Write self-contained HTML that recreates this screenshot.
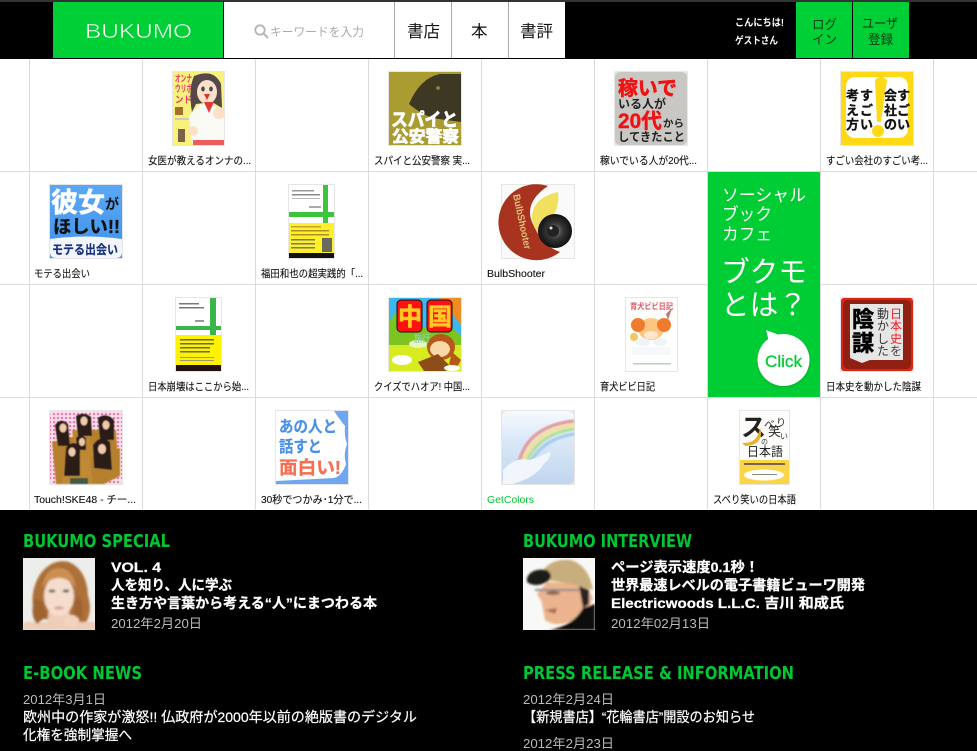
<!DOCTYPE html>
<html lang="ja"><head><meta charset="utf-8"><title>BUKUMO</title>
<style>
html,body{margin:0;padding:0;background:#fff;width:977px;height:751px;overflow:hidden}
svg{display:block}
text{font-family:"Liberation Sans","Noto Sans CJK JP",sans-serif}
.cap{font-size:10.5px;fill:#111;stroke:#111;stroke-width:.12}
.h{font-size:18px;font-weight:bold;fill:#00c832;font-family:"DejaVu Sans","Liberation Sans",sans-serif}
.b{font-size:14px;font-weight:bold;fill:#fff;stroke:#fff;stroke-width:.25}
.d{font-size:13px;fill:#bbb}
.n{font-size:14px;fill:#fff;stroke:#fff;stroke-width:.2}
.nav{font-size:16.5px;fill:#111}
.g{font-size:13px;fill:#0b3a16}
.s{font-size:17px;fill:#fff}
.big{font-size:29px;fill:#fff}
</style></head><body>
<svg width="977" height="751" viewBox="0 0 977 751" xmlns="http://www.w3.org/2000/svg">
<defs>
<filter id="bl"><feGaussianBlur stdDeviation="1"/></filter>
<filter id="bl3"><feGaussianBlur stdDeviation=".6"/></filter>
<filter id="sh" x="-20%" y="-20%" width="140%" height="140%"><feDropShadow dx="0" dy="1" stdDeviation="1" flood-color="#063" flood-opacity=".35"/></filter>
<linearGradient id="rb" x1="0" y1="0" x2="0" y2="1"><stop offset="0" stop-color="#f6faff"/><stop offset=".4" stop-color="#dbe8f7"/><stop offset="1" stop-color="#c0d6ef"/></linearGradient>
<linearGradient id="blu" x1="0" y1="0" x2="0" y2="1"><stop offset="0" stop-color="#5aa8f5"/><stop offset="1" stop-color="#3f90ea"/></linearGradient>
<radialGradient id="lens"><stop offset="0" stop-color="#8a8a8a"/><stop offset=".5" stop-color="#333"/><stop offset="1" stop-color="#111"/></radialGradient>
<pattern id="dots" width="4" height="4" patternUnits="userSpaceOnUse"><rect width="4" height="4" fill="#fbe3ee"/><circle cx="2" cy="2" r="1.300" fill="#ee7db4"/></pattern>
</defs>
<rect width="977" height="751" fill="#fff"/>
<!-- grid -->
<g fill="#dcdcdc">
<rect x="29" y="58" width="1" height="452"/><rect x="142" y="58" width="1" height="452"/><rect x="255" y="58" width="1" height="452"/><rect x="368" y="58" width="1" height="452"/><rect x="481" y="58" width="1" height="452"/><rect x="594" y="58" width="1" height="452"/><rect x="707" y="58" width="1" height="452"/><rect x="820" y="58" width="1" height="452"/><rect x="933" y="58" width="1" height="452"/>
<rect x="0" y="171" width="977" height="1"/><rect x="0" y="284" width="977" height="1"/><rect x="0" y="397" width="977" height="1"/>
</g>
<!-- header -->
<rect width="977" height="59" fill="#000"/><rect width="977" height="2" fill="#333"/>
<rect x="53" y="2" width="170" height="56" fill="#00cf35"/>
<text x="85" y="38" font-size="20" fill="#fff" stroke="#00cf35" stroke-width=".5" textLength="107" lengthAdjust="spacingAndGlyphs">BUKUMO</text>
<rect x="224" y="2" width="170" height="56" fill="#fff"/>
<circle cx="260" cy="30" r="4.700" fill="none" stroke="#b5b5b5" stroke-width="1.800"/><path d="M263.500 33.500L268 38" stroke="#b5b5b5" stroke-width="2"/>
<text x="270" y="36" font-size="12" fill="#aaa" textLength="94" lengthAdjust="spacingAndGlyphs">キーワードを入力</text>
<rect x="395" y="2" width="170" height="56" fill="#fff"/><rect x="394" y="2" width="1" height="56" fill="#aaa"/><rect x="451" y="2" width="1" height="56" fill="#aaa"/><rect x="508" y="2" width="1" height="56" fill="#aaa"/>
<text class="nav" x="407" y="37" textLength="33" lengthAdjust="spacingAndGlyphs">書店</text><text class="nav" x="471" y="37">本</text><text class="nav" x="520" y="37" textLength="33" lengthAdjust="spacingAndGlyphs">書評</text>
<text x="735" y="26" font-size="10" font-weight="bold" fill="#fff" textLength="49" lengthAdjust="spacingAndGlyphs">こんにちは!</text>
<text x="735" y="44" font-size="10" font-weight="bold" fill="#fff" textLength="43" lengthAdjust="spacingAndGlyphs">ゲストさん</text>
<rect x="796" y="2" width="56" height="56" fill="#00cf35"/><rect x="853" y="2" width="56" height="56" fill="#00cf35"/>
<text class="g" x="812" y="29" textLength="25" lengthAdjust="spacingAndGlyphs">ログ</text><text class="g" x="812" y="44" textLength="25" lengthAdjust="spacingAndGlyphs">イン</text>
<text class="g" x="862" y="28" textLength="36" lengthAdjust="spacingAndGlyphs">ユーザ</text><text class="g" x="868" y="44" textLength="25" lengthAdjust="spacingAndGlyphs">登録</text>
<!-- green panel -->
<rect x="708" y="172" width="112" height="225" fill="#00cc33"/>
<text class="s" x="722" y="201" textLength="84" lengthAdjust="spacingAndGlyphs">ソーシャル</text><text class="s" x="722" y="220" textLength="50" lengthAdjust="spacingAndGlyphs">ブック</text><text class="s" x="722" y="240" textLength="50" lengthAdjust="spacingAndGlyphs">カフェ</text>
<text class="big" x="721" y="282" textLength="86" lengthAdjust="spacingAndGlyphs">ブクモ</text><text class="big" x="721" y="315" textLength="86" lengthAdjust="spacingAndGlyphs">とは？</text>
<g filter="url(#sh)"><path d="M766 330L782 336L770 346Z" fill="#fff"/><circle cx="783.500" cy="360" r="26" fill="#fff"/></g>
<text x="765" y="367" font-size="17" fill="#00cc33" stroke="#00cc33" stroke-width=".3" textLength="37" lengthAdjust="spacingAndGlyphs">Click</text>
<!-- covers row 1 -->
<g>
<rect x="172" y="71" width="53" height="75" fill="#e6e6e6"/><rect x="173" y="72" width="51" height="73" fill="#f7f27c"/>
<g font-size="9.500" font-weight="bold" fill="#e6386c"><text x="175" y="82" textLength="17" lengthAdjust="spacingAndGlyphs">オンナ</text><text x="175" y="92" textLength="17" lengthAdjust="spacingAndGlyphs">ウリボ</text><text x="175" y="103" textLength="17" lengthAdjust="spacingAndGlyphs">ンド</text></g>
<path d="M194 76Q214 68 221 84L222 108L212 102L196 104L192 112Q188 90 194 76Z" fill="#55474a"/>
<ellipse cx="207" cy="92" rx="10" ry="12" fill="#fde0c8"/><ellipse cx="203" cy="89" rx="1.800" ry="2.500" fill="#445"/><ellipse cx="211" cy="89" rx="1.800" ry="2.500" fill="#445"/><path d="M204 94L210 94L207 100Z" fill="#d33"/>
<path d="M189 116L200 104L215 106L224 118L224 143L192 143Z" fill="#fafaf5"/><path d="M204 102L214 102L209 113Z" fill="#e23a3a"/><path d="M193 140L224 140L224 145L193 145Z" fill="#ef5a5a"/><ellipse cx="219" cy="113" rx="6" ry="6" fill="#fde0c8"/><ellipse cx="193" cy="131" rx="5" ry="5" fill="#fde0c8"/>
<rect x="175" y="107" width="8" height="8" fill="#a5702f"/><rect x="178" y="129" width="7" height="13" fill="#7c624a"/><rect x="175" y="118" width="14" height="2" fill="#ccb"/>
</g>
<g>
<rect x="388" y="71" width="74" height="75" fill="#e6e6e6"/><rect x="389" y="72" width="72" height="73" fill="#aa9c30"/>
<path d="M409 104Q420 78 440 74L461 74L461 122L432 118Q418 112 409 104Z" fill="#3d3823"/><circle cx="438" cy="88" r="2" fill="#887a30"/>
<text x="391" y="126" font-size="18" font-weight="bold" fill="#fff" stroke="#fff" stroke-width=".8" textLength="67" lengthAdjust="spacingAndGlyphs">スパイと</text>
<text x="392" y="142" font-size="16" font-weight="bold" fill="#fff" stroke="#fff" stroke-width=".8" textLength="67" lengthAdjust="spacingAndGlyphs">公安警察</text>
</g>
<g>
<rect x="614" y="71" width="74" height="75" rx="2" fill="#e6e6e6"/><rect x="615" y="72" width="72" height="73" rx="5" fill="#c9c7c4"/>
<text x="618" y="95" font-size="20" font-weight="bold" fill="#f21111" stroke="#f21111" stroke-width=".5" textLength="59" lengthAdjust="spacingAndGlyphs">稼いで</text>
<text x="618" y="108" font-size="12" font-weight="bold" fill="#222" textLength="48" lengthAdjust="spacingAndGlyphs">いる人が</text>
<text x="618" y="128" font-size="21" font-weight="bold" fill="#f21111" stroke="#f21111" stroke-width=".4" textLength="44" lengthAdjust="spacingAndGlyphs">20代</text><text x="663" y="127" font-size="10" font-weight="bold" fill="#222" textLength="21" lengthAdjust="spacingAndGlyphs">から</text>
<text x="618" y="141" font-size="12" font-weight="bold" fill="#222" textLength="67" lengthAdjust="spacingAndGlyphs">してきたこと</text>
</g>
<g>
<rect x="840" y="71" width="74" height="75" fill="#e6e6e6"/><rect x="841" y="72" width="72" height="73" fill="#ffd816"/><rect x="846" y="77" width="62" height="61" rx="9" fill="#fff"/>
<path d="M875 80Q881 74 887 80L881 122L877 122Z" fill="#ffd816"/><circle cx="878" cy="131" r="6" fill="#ffd816"/>
<g font-size="13" font-weight="bold" fill="#111" stroke="#111" stroke-width=".3"><text x="897" y="100">す</text><text x="897" y="115">ご</text><text x="897" y="129">い</text><text x="884" y="100">会</text><text x="884" y="115">社</text><text x="884" y="129">の</text><text x="860" y="100">す</text><text x="860" y="115">ご</text><text x="860" y="129">い</text><text x="846" y="100">考</text><text x="846" y="115">え</text><text x="846" y="129">方</text></g>
</g>
<!-- row 2 -->
<g>
<rect x="49" y="184" width="74" height="75" fill="#e6e6e6"/><rect x="50" y="185" width="72" height="73" fill="url(#blu)"/>
<text x="51" y="212" font-size="27" font-weight="bold" fill="#fff" stroke="#fff" stroke-width=".6" textLength="54" lengthAdjust="spacingAndGlyphs">彼女</text><text x="105" y="209" font-size="14" font-weight="bold" fill="#111">が</text>
<text x="53" y="233" font-size="18" font-weight="bold" fill="#111" stroke="#111" stroke-width=".3" textLength="67" lengthAdjust="spacingAndGlyphs">ほしい!!</text>
<path d="M50 239Q86 234 122 239L122 252Q122 258 116 258L56 258Q50 258 50 252Z" fill="#f2f5fb"/>
<text x="52" y="254" font-size="12.500" font-weight="bold" fill="#17337e" stroke="#17337e" stroke-width=".2" textLength="66" lengthAdjust="spacingAndGlyphs">モテる出会い</text>
</g>
<g>
<rect x="288" y="184" width="47" height="75" fill="#e6e6e6"/><rect x="289" y="185" width="45" height="73" fill="#fff"/>
<rect x="323" y="185" width="5" height="38" fill="#3cc53a"/><rect x="289" y="212" width="45" height="5" fill="#3cc53a"/><rect x="289" y="223" width="45" height="30" fill="#fff02a"/><rect x="289" y="253" width="45" height="5" fill="#111"/>
<rect x="292" y="190" width="22" height="1.500" fill="#999"/><rect x="292" y="194" width="28" height="1.500" fill="#888"/><rect x="292" y="198" width="28" height="1" fill="#bbb"/><rect x="309" y="206" width="12" height="2" fill="#aaa"/>
<rect x="291" y="226" width="30" height="1.500" fill="#c9a030"/><rect x="291" y="230" width="38" height="1.500" fill="#b09020"/><rect x="291" y="234" width="38" height="1.500" fill="#b09020"/><rect x="291" y="239" width="24" height="1.500" fill="#776"/><rect x="291" y="243" width="24" height="1.500" fill="#776"/><rect x="291" y="247" width="24" height="1.500" fill="#776"/><rect x="322" y="238" width="10" height="14" fill="#6a6a5a"/>
</g>
<g>
<rect x="501" y="184" width="74" height="75" fill="#e6e6e6"/><rect x="502" y="185" width="72" height="73" fill="#fafafa"/>
<path d="M548 186A38 38 0 1 0 560 252Q542 246 532 222Q524 202 548 186Z" fill="#a8341f"/>
<path d="M558 192Q532 198 532 218Q534 232 544 238L552 218Q560 206 558 192Z" fill="#f1df5e"/>
<text x="513" y="195" font-size="10" font-weight="bold" fill="#e0c078" transform="rotate(78 513 195)" textLength="56" lengthAdjust="spacingAndGlyphs">BulbShooter</text>
<circle cx="555" cy="231" r="17" fill="url(#lens)"/><circle cx="553" cy="231" r="6" fill="#222"/><circle cx="551" cy="228" r="1.500" fill="#ddd"/>
</g>
<!-- row 3 -->
<g>
<rect x="175" y="297" width="47" height="75" fill="#e6e6e6"/><rect x="176" y="298" width="45" height="73" fill="#fff"/>
<rect x="210" y="298" width="6" height="37" fill="#3bb54a"/><rect x="176" y="326" width="45" height="4" fill="#3bb54a"/><rect x="176" y="335" width="45" height="30" fill="#fff200"/><rect x="176" y="365" width="45" height="6" fill="#211"/>
<rect x="179" y="303" width="20" height="1.500" fill="#777"/><rect x="179" y="307" width="25" height="1.500" fill="#777"/><rect x="195" y="320" width="9" height="2" fill="#999"/>
<rect x="180" y="339" width="34" height="1.500" fill="#665"/><rect x="180" y="343" width="34" height="1.500" fill="#665"/><rect x="180" y="347" width="30" height="1.500" fill="#665"/><rect x="180" y="351" width="30" height="1.500" fill="#665"/><rect x="180" y="357" width="34" height="1" fill="#997"/><rect x="180" y="360" width="34" height="1" fill="#997"/>
</g>
<g>
<rect x="388" y="297" width="74" height="75" fill="#e6e6e6"/><rect x="389" y="298" width="72" height="73" fill="#3db7ee"/><path d="M440 298L461 298L461 325Z" fill="#f08a22"/>
<path d="M389 322L396 312L405 330L416 330L428 326L445 322L461 336L461 371L389 371Z" fill="#7cc420"/><path d="M389 345L461 345L461 371L389 371Z" fill="#d6ec20"/>
<rect x="397" y="300" width="25" height="32" rx="4" fill="#f11" stroke="#111"/><rect x="427" y="300" width="25" height="32" rx="4" fill="#f11" stroke="#111"/>
<text x="398" y="325" font-size="24" font-weight="bold" fill="#fc2" stroke="#fc2" stroke-width=".6">中</text><text x="428" y="325" font-size="24" font-weight="bold" fill="#fc2" stroke="#fc2" stroke-width=".6">国</text>
<ellipse cx="441" cy="347" rx="14" ry="13" fill="#b5581a"/><ellipse cx="440" cy="349" rx="10" ry="8" fill="#fbd9a6"/><path d="M418 362L438 354L450 366L446 371L424 371Z" fill="#8c4d18"/><path d="M452 352L461 360L456 369L449 364Z" fill="#b5581a"/>
<ellipse cx="402" cy="360" rx="10" ry="5" fill="#fff"/><ellipse cx="418" cy="344" rx="9" ry="4" fill="#e8f5c0"/><ellipse cx="452" cy="368" rx="8" ry="3" fill="#fff"/><text x="414" y="342" font-size="10" font-weight="bold" fill="#8ed0a0" textLength="16" lengthAdjust="spacingAndGlyphs">旅行</text>
</g>
<g>
<rect x="625" y="297" width="53" height="75" fill="#e6e6e6"/><rect x="626" y="298" width="51" height="73" fill="#fefefc"/>
<text x="630" y="309" font-size="8" font-weight="bold" fill="#d9566a" textLength="43" lengthAdjust="spacingAndGlyphs">育犬ビビ日記</text>
<ellipse cx="651" cy="329" rx="13" ry="11" fill="#fbc680"/><ellipse cx="638" cy="325" rx="7" ry="7" fill="#ef7c2e"/><ellipse cx="664" cy="325" rx="7" ry="7" fill="#ef7c2e"/><ellipse cx="651" cy="335" rx="7" ry="4" fill="#ffe8cf"/><path d="M666 314L672 308L668 320Z" fill="#b77"/><circle cx="634" cy="337" r="4" fill="#eec860"/>
<ellipse cx="643" cy="342" rx="7" ry="4" fill="#eef3f8"/><ellipse cx="660" cy="342" rx="7" ry="4" fill="#eef3f8"/><rect x="632" y="347" width="38" height="8" fill="#f4f8fb"/><rect x="633" y="363" width="38" height="1.500" fill="#bcc"/>
</g>
<g>
<rect x="840" y="297" width="74" height="75" fill="#e6e6e6"/><rect x="841" y="298" width="72" height="73" rx="3" fill="#d92612"/><rect x="843" y="300" width="68" height="69" rx="5" fill="#541c10" opacity=".55"/>
<path d="M850 304L903 304L903 360L870 360L862 363L850 358Z" fill="#e6e6e6"/>
<text x="852" y="327" font-size="22" font-weight="bold" fill="#000" stroke="#000" stroke-width=".6">陰</text><text x="852" y="351" font-size="22" font-weight="bold" fill="#000" stroke="#000" stroke-width=".6">謀</text>
<g font-size="12"><text x="877" y="318" fill="#333">動</text><text x="877" y="330" fill="#333">か</text><text x="877" y="343" fill="#333">し</text><text x="877" y="355" fill="#333">た</text><text x="890" y="318" fill="#e22">日</text><text x="890" y="330" fill="#e22">本</text><text x="890" y="343" fill="#e22">史</text><text x="890" y="355" fill="#444">を</text></g>
</g>
<!-- row 4 -->
<g>
<rect x="49" y="410" width="74" height="75" fill="#e6e6e6"/><rect x="50" y="411" width="72" height="73" rx="6" fill="url(#dots)"/>
<g filter="url(#bl3)">
<path d="M52 442L76 436L80 484L56 484Z" fill="#b6812f"/><path d="M72 430L96 430L100 462L76 462Z" fill="#bd8632"/><path d="M88 430L116 430L118 462L96 462Z" fill="#b6812f"/><path d="M64 462L90 458L96 484L62 484Z" fill="#c08a34"/><path d="M90 456L120 448L120 476L104 484L92 484Z" fill="#b6812f"/>
<path d="M55 425Q61 417 68 424L70 446L58 446Z" fill="#2b1b12"/><path d="M76 416Q84 411 91 417L92 436L78 436Z" fill="#2b1b12"/><path d="M98 418Q106 412 114 420L114 440L100 440Z" fill="#2b1b12"/><path d="M66 448Q72 439 80 446L80 476L64 476Z" fill="#2b1b12"/><path d="M93 445Q100 434 110 442L112 470L94 468Z" fill="#2b1b12"/><path d="M76 438Q80 433 86 438L86 450L77 450Z" fill="#2b1b12"/>
<ellipse cx="63" cy="428" rx="3.500" ry="4.500" fill="#f0c9ac"/><ellipse cx="84" cy="421" rx="3.500" ry="4.500" fill="#f0c9ac"/><ellipse cx="106" cy="425" rx="3.500" ry="4.500" fill="#f0c9ac"/><ellipse cx="72" cy="452" rx="3.500" ry="4.500" fill="#f0c9ac"/><ellipse cx="102" cy="449" rx="4" ry="5" fill="#f0c9ac"/><ellipse cx="82" cy="442" rx="3" ry="4" fill="#f0c9ac"/>
<rect x="70" y="478" width="18" height="6" fill="#3f5a45"/>
</g>
</g>
<g>
<rect x="275" y="410" width="74" height="75" fill="#e6e6e6"/><rect x="276" y="411" width="72" height="73" fill="#6ea7ef"/>
<path d="M276 411L334 411Q340 420 345 426Q344 436 347 444Q343 454 346 464Q342 476 334 478L276 481Z" fill="#fff"/>
<text x="279" y="432" font-size="16" font-weight="bold" fill="#4a90e6" stroke="#4a90e6" stroke-width=".2" textLength="58" lengthAdjust="spacingAndGlyphs">あの人と</text>
<text x="279" y="452" font-size="16" font-weight="bold" fill="#4a90e6" stroke="#4a90e6" stroke-width=".2" textLength="43" lengthAdjust="spacingAndGlyphs">話すと</text>
<text x="279" y="474" font-size="18" font-weight="bold" fill="#f56f52" stroke="#f56f52" stroke-width=".3" textLength="62" lengthAdjust="spacingAndGlyphs">面白い!</text>
</g>
<g>
<rect x="501" y="410" width="74" height="75" fill="#e6e6e6"/><rect x="502" y="411" width="72" height="73" rx="6" fill="url(#rb)"/>
<g fill="none" stroke-width="3.500" filter="url(#bl3)"><path d="M519 462Q528 426 574 421" stroke="#e3a0a4"/><path d="M522 464Q532 430 574 425" stroke="#f2df98"/><path d="M525 466Q536 434 574 429" stroke="#b7e0a0"/><path d="M528 468Q540 439 574 434" stroke="#a7cfee"/></g>
<path d="M503 470Q516 456 530 460L550 452Q552 456 543 465Q535 478 512 484L503 484Z" fill="#f1f6fd"/>
</g>
<g>
<rect x="739" y="410" width="51" height="75" fill="#e6e6e6"/><rect x="740" y="411" width="49" height="73" fill="#fdfdfc"/>
<text x="741" y="436" font-size="25" fill="#222" font-weight="bold">ス</text>
<text x="764" y="428" font-size="11" fill="#333">べ</text><text x="776" y="426" font-size="10" fill="#333">り</text><text x="768" y="436" font-size="13" fill="#222">笑</text><text x="761" y="444" font-size="7" fill="#333">の</text><text x="780" y="439" font-size="8" fill="#333">い</text>
<path d="M742 443Q758 444 760 427Q765 445 745 446Z" fill="#e9b22a"/>
<text x="747" y="456" font-size="12.500" fill="#222" textLength="36" lengthAdjust="spacingAndGlyphs">日本語</text>
<rect x="740" y="460" width="49" height="24" fill="#fbd548"/><ellipse cx="764" cy="475" rx="20" ry="5.500" fill="#fff"/><rect x="744" y="463" width="41" height="2" fill="#765"/><rect x="752" y="474" width="25" height="1" fill="#887"/>
</g>
<!-- captions -->
<g>
<text class="cap" x="148" y="164" textLength="103" lengthAdjust="spacingAndGlyphs">女医が教えるオンナの...</text>
<text class="cap" x="374" y="164" textLength="96" lengthAdjust="spacingAndGlyphs">スパイと公安警察 実...</text>
<text class="cap" x="600" y="164" textLength="97" lengthAdjust="spacingAndGlyphs">稼いでいる人が20代...</text>
<text class="cap" x="826" y="164" textLength="102" lengthAdjust="spacingAndGlyphs">すごい会社のすごい考...</text>
<text class="cap" x="34" y="277" textLength="56" lengthAdjust="spacingAndGlyphs">モテる出会い</text>
<text class="cap" x="261" y="277" textLength="102" lengthAdjust="spacingAndGlyphs">福田和也の超実践的「...</text>
<text class="cap" x="487" y="277" textLength="58" lengthAdjust="spacingAndGlyphs">BulbShooter</text>
<text class="cap" x="148" y="390" textLength="101" lengthAdjust="spacingAndGlyphs">日本崩壊はここから始...</text>
<text class="cap" x="374" y="390" textLength="96" lengthAdjust="spacingAndGlyphs">クイズでハオア! 中国...</text>
<text class="cap" x="600" y="390" textLength="55" lengthAdjust="spacingAndGlyphs">育犬ビビ日記</text>
<text class="cap" x="826" y="390" textLength="95" lengthAdjust="spacingAndGlyphs">日本史を動かした陰謀</text>
<text class="cap" x="34" y="503" textLength="102" lengthAdjust="spacingAndGlyphs">Touch!SKE48 - チー...</text>
<text class="cap" x="261" y="503" textLength="101" lengthAdjust="spacingAndGlyphs">30秒でつかみ･1分で...</text>
<text class="cap" x="487" y="503" textLength="47" lengthAdjust="spacingAndGlyphs" style="fill:#00c832;stroke:none">GetColors</text>
<text class="cap" x="713" y="503" textLength="83" lengthAdjust="spacingAndGlyphs">スベり笑いの日本語</text>
</g>
<!-- footer -->
<rect x="0" y="510" width="977" height="241" fill="#000"/>
<text class="h" x="23" y="547" textLength="147" lengthAdjust="spacingAndGlyphs">BUKUMO SPECIAL</text>
<text class="h" x="523" y="547" textLength="169" lengthAdjust="spacingAndGlyphs">BUKUMO INTERVIEW</text>
<text class="h" x="23" y="679" textLength="119" lengthAdjust="spacingAndGlyphs">E-BOOK NEWS</text>
<text class="h" x="523" y="679" textLength="271" lengthAdjust="spacingAndGlyphs">PRESS RELEASE &amp; INFORMATION</text>
<!-- portrait 1 -->
<svg x="23" y="558" width="72" height="72" viewBox="0 0 72 72"><rect width="72" height="72" fill="#ededeb"/><g filter="url(#bl)"><path d="M14 60Q4 40 16 18Q28 0 46 4Q64 12 65 38Q70 54 62 66L50 62L28 62Z" fill="#ad6f38"/><rect x="0" y="64" width="72" height="8" fill="#eccdb8"/><path d="M26 50L46 50L48 70L24 70Z" fill="#efcdb8"/><ellipse cx="36" cy="38" rx="15" ry="20" fill="#f5dccc"/><path d="M19 30Q22 10 36 10Q50 10 53 30Q46 20 36 20Q26 20 19 30Z" fill="#cb8f52"/><ellipse cx="29" cy="33" rx="3.500" ry="1.500" fill="#554"/><ellipse cx="43" cy="33" rx="3.500" ry="1.500" fill="#554"/><ellipse cx="36" cy="50" rx="5" ry="1.500" fill="#d79a92"/><ellipse cx="48" cy="63" rx="8" ry="6" fill="#f3d2be"/><path d="M12 40Q6 56 14 66L24 58L20 44Z" fill="#9f6433"/><path d="M56 38Q62 50 58 62L50 56L52 42Z" fill="#9f6433"/></g></svg>
<!-- portrait 2 -->
<svg x="523" y="558" width="72" height="72" viewBox="0 0 72 72"><rect width="72" height="72" fill="#f8f8f6"/><g filter="url(#bl)"><path d="M14 36Q30 66 62 58L70 40L62 26L24 24Z" fill="#ebb48e"/><path d="M18 40L22 62Q36 72 58 58L62 30L24 30Z" fill="#ebb48e"/><path d="M56 28L66 32L66 46L60 50Z" fill="#2a2320"/><path d="M20 12Q30 0 48 2Q66 8 70 32L48 26L24 22Z" fill="#c8ae7c"/><path d="M4 20Q8 10 24 12Q32 18 24 24Q12 30 4 24Z" fill="#1d1a18"/><rect x="12" y="31" width="44" height="2" fill="#888"/><ellipse cx="30" cy="35" rx="7" ry="2" fill="#8a6a55"/><path d="M22 52L34 50L32 56Z" fill="#a86a55"/><path d="M26 72Q50 68 60 50L72 46L72 72Z" fill="#111"/></g></svg>
<text class="b" x="111" y="572" textLength="50" lengthAdjust="spacingAndGlyphs">VOL. 4</text>
<text class="b" x="111" y="590" textLength="121" lengthAdjust="spacingAndGlyphs">人を知り、人に学ぶ</text>
<text class="b" x="111" y="608" textLength="266" lengthAdjust="spacingAndGlyphs">生き方や言葉から考える“人”にまつわる本</text>
<text class="d" x="111" y="628" textLength="91" lengthAdjust="spacingAndGlyphs">2012年2月20日</text>
<text class="b" x="611" y="572" textLength="148" lengthAdjust="spacingAndGlyphs">ページ表示速度0.1秒！</text>
<text class="b" x="611" y="590" textLength="254" lengthAdjust="spacingAndGlyphs">世界最速レベルの電子書籍ビューワ開発</text>
<text class="b" x="611" y="608" textLength="233" lengthAdjust="spacingAndGlyphs">Electricwoods L.L.C. 吉川 和成氏</text>
<text class="d" x="611" y="628" textLength="99" lengthAdjust="spacingAndGlyphs">2012年02月13日</text>
<text class="d" x="23" y="704" textLength="83" lengthAdjust="spacingAndGlyphs">2012年3月1日</text>
<text class="n" x="23" y="722" textLength="394" lengthAdjust="spacingAndGlyphs">欧州中の作家が激怒!! 仏政府が2000年以前の絶版書のデジタル</text>
<text class="n" x="23" y="740" textLength="109" lengthAdjust="spacingAndGlyphs">化権を強制掌握へ</text>
<text class="d" x="523" y="704" textLength="91" lengthAdjust="spacingAndGlyphs">2012年2月24日</text>
<text class="n" x="523" y="722" textLength="232" lengthAdjust="spacingAndGlyphs">【新規書店】“花輪書店”開設のお知らせ</text>
<text class="d" x="523" y="748" textLength="91" lengthAdjust="spacingAndGlyphs">2012年2月23日</text>
</svg>
</body></html>
